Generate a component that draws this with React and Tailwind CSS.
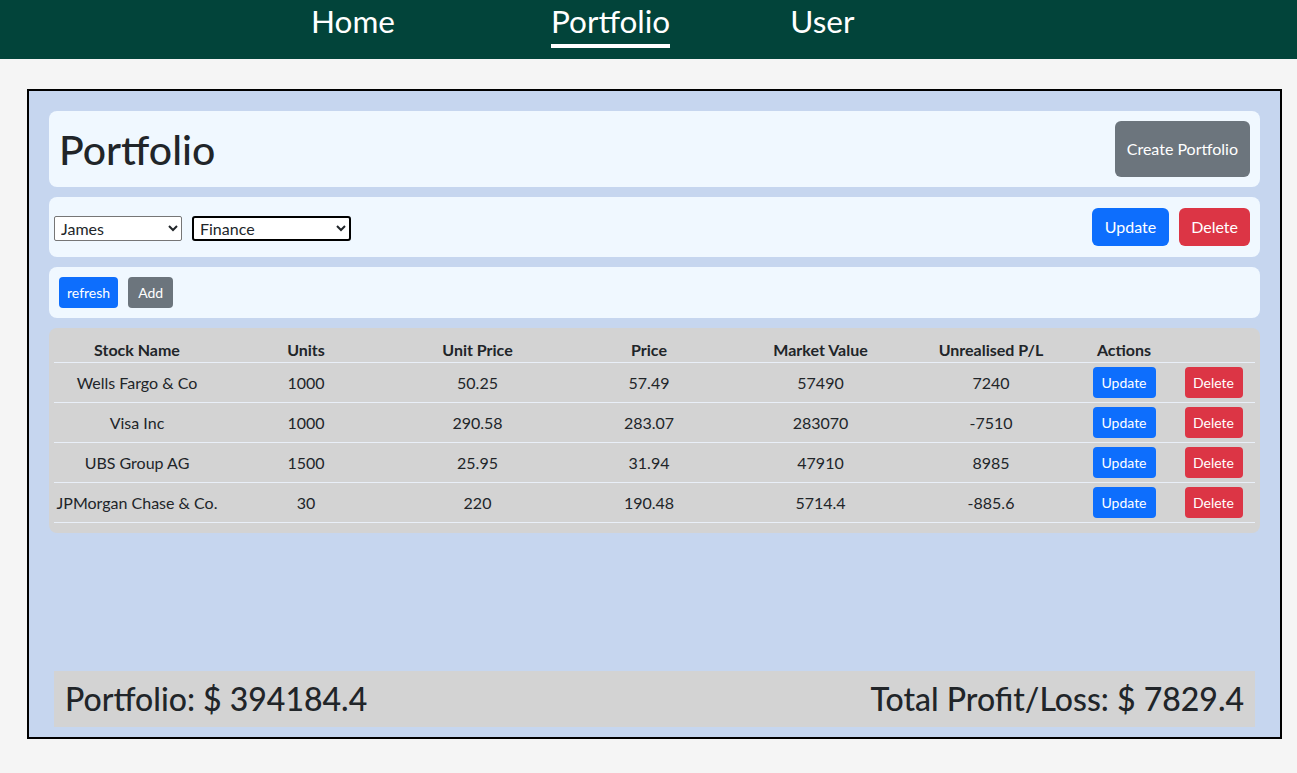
import React from 'react';

const rows = [
  { name: 'Wells Fargo & Co', units: 1000, unitPrice: 50.25, price: 57.49, value: 57490, pl: 7240 },
  { name: 'Visa Inc', units: 1000, unitPrice: 290.58, price: 283.07, value: 283070, pl: -7510 },
  { name: 'UBS Group AG', units: 1500, unitPrice: 25.95, price: 31.94, value: 47910, pl: 8985 },
  { name: 'JPMorgan Chase & Co.', units: 30, unitPrice: 220, price: 190.48, value: 5714.4, pl: -885.6 },
];

const font = { fontFamily: 'Lato, "Noto Sans", sans-serif' };

export default function App() {
  return (
    <div className="min-h-screen bg-[#f5f5f5] text-[#212529]" style={font}>
      {/* Navbar */}
      <nav className="h-[59px] bg-[#02443a] flex items-start">
        <a className="ml-[311px] mt-[3px] text-[31.5px] leading-[36px] text-white">Home</a>
        <a className="ml-[156px] mt-[3px] text-[31.5px] leading-[36px] text-white border-b-4 border-white pb-[5px]">
          Portfolio
        </a>
        <a className="ml-[120px] mt-[3px] text-[31.5px] leading-[36px] text-white">User</a>
      </nav>

      <div className="ml-[27px] mt-[30px] w-[1255px] h-[650px] border-2 border-black bg-[#c6d6ef] px-[20px] pt-[20px] pb-[10px] flex flex-col">
        {/* Header card */}
        <div className="h-[76px] bg-[#f0f8ff] rounded-lg flex items-center justify-between pl-[10px] pr-[10px]">
          <h1 className="text-[41px] font-medium leading-none">Portfolio</h1>
          <button className="h-[56px] px-3 rounded-md bg-[#6c757d] text-white text-[16px]">Create Portfolio</button>
        </div>

        {/* Select card */}
        <div className="mt-[10px] h-[60px] bg-[#f0f8ff] rounded-lg flex items-center justify-between pl-[5px] pr-[10px]">
          <div className="flex items-center gap-[10px] mt-[2px]">
            <select className="w-[128px] h-[25px] border border-[#767676] rounded-[2px] bg-white text-[16px] px-[2px]" defaultValue="James">
              <option>James</option>
            </select>
            <select className="w-[159px] h-[25px] border-2 border-black rounded-[3px] bg-white text-[16px] px-[2px]" defaultValue="Finance">
              <option>Finance</option>
            </select>
          </div>
          <div className="flex items-center gap-[10px]">
            <button className="h-[38px] px-[13px] rounded-md bg-[#0d6efd] text-white text-[16px]">Update</button>
            <button className="h-[38px] px-3 rounded-md bg-[#dc3545] text-white text-[16px]">Delete</button>
          </div>
        </div>

        {/* Toolbar card */}
        <div className="mt-[10px] h-[51px] bg-[#f0f8ff] rounded-lg flex items-center gap-[10px] pl-[10px]">
          <button className="h-[31px] px-2 rounded bg-[#0d6efd] text-white text-[14px]">refresh</button>
          <button className="h-[31px] px-[10px] rounded bg-[#6c757d] text-white text-[14px]">Add</button>
        </div>

        {/* Table card */}
        <div className="mt-[10px] bg-[#d3d3d3] rounded-lg px-[5px] pt-[10px] pb-[10px]">
          <table className="w-full table-fixed border-collapse text-center text-[16px]">
            <colgroup>
              <col className="w-[166px]" />
              <col className="w-[172px]" />
              <col className="w-[171px]" />
              <col className="w-[172px]" />
              <col className="w-[171px]" />
              <col className="w-[170px]" />
              <col className="w-[96px]" />
              <col className="w-[83px]" />
            </colgroup>
            <thead>
              <tr className="border-b border-[#e9eff8] h-[24px]">
                <th className="font-bold">Stock Name</th>
                <th className="font-bold">Units</th>
                <th className="font-bold">Unit Price</th>
                <th className="font-bold">Price</th>
                <th className="font-bold">Market Value</th>
                <th className="font-bold">Unrealised P/L</th>
                <th className="font-bold">Actions</th>
                <th></th>
              </tr>
            </thead>
            <tbody>
              {rows.map((r) => (
                <tr key={r.name} className="border-b border-[#e9eff8] h-[40px]">
                  <td className="whitespace-nowrap">{r.name}</td>
                  <td>{r.units}</td>
                  <td>{r.unitPrice}</td>
                  <td>{r.price}</td>
                  <td>{r.value}</td>
                  <td>{r.pl}</td>
                  <td>
                    <button className="h-[31px] w-[63px] rounded bg-[#0d6efd] text-white text-[14px]">Update</button>
                  </td>
                  <td>
                    <button className="h-[31px] w-[58px] rounded bg-[#dc3545] text-white text-[14px]">Delete</button>
                  </td>
                </tr>
              ))}
            </tbody>
          </table>
        </div>

        {/* Footer totals */}
        <div className="mt-auto mx-[5px] h-[56px] bg-[#d3d3d3] flex items-center justify-between px-[11px]">
          <h2 className="text-[32px] font-medium leading-none">Portfolio: $ 394184.4</h2>
          <h2 className="text-[32px] font-medium leading-none">Total Profit/Loss: $ 7829.4</h2>
        </div>
      </div>
    </div>
  );
}
